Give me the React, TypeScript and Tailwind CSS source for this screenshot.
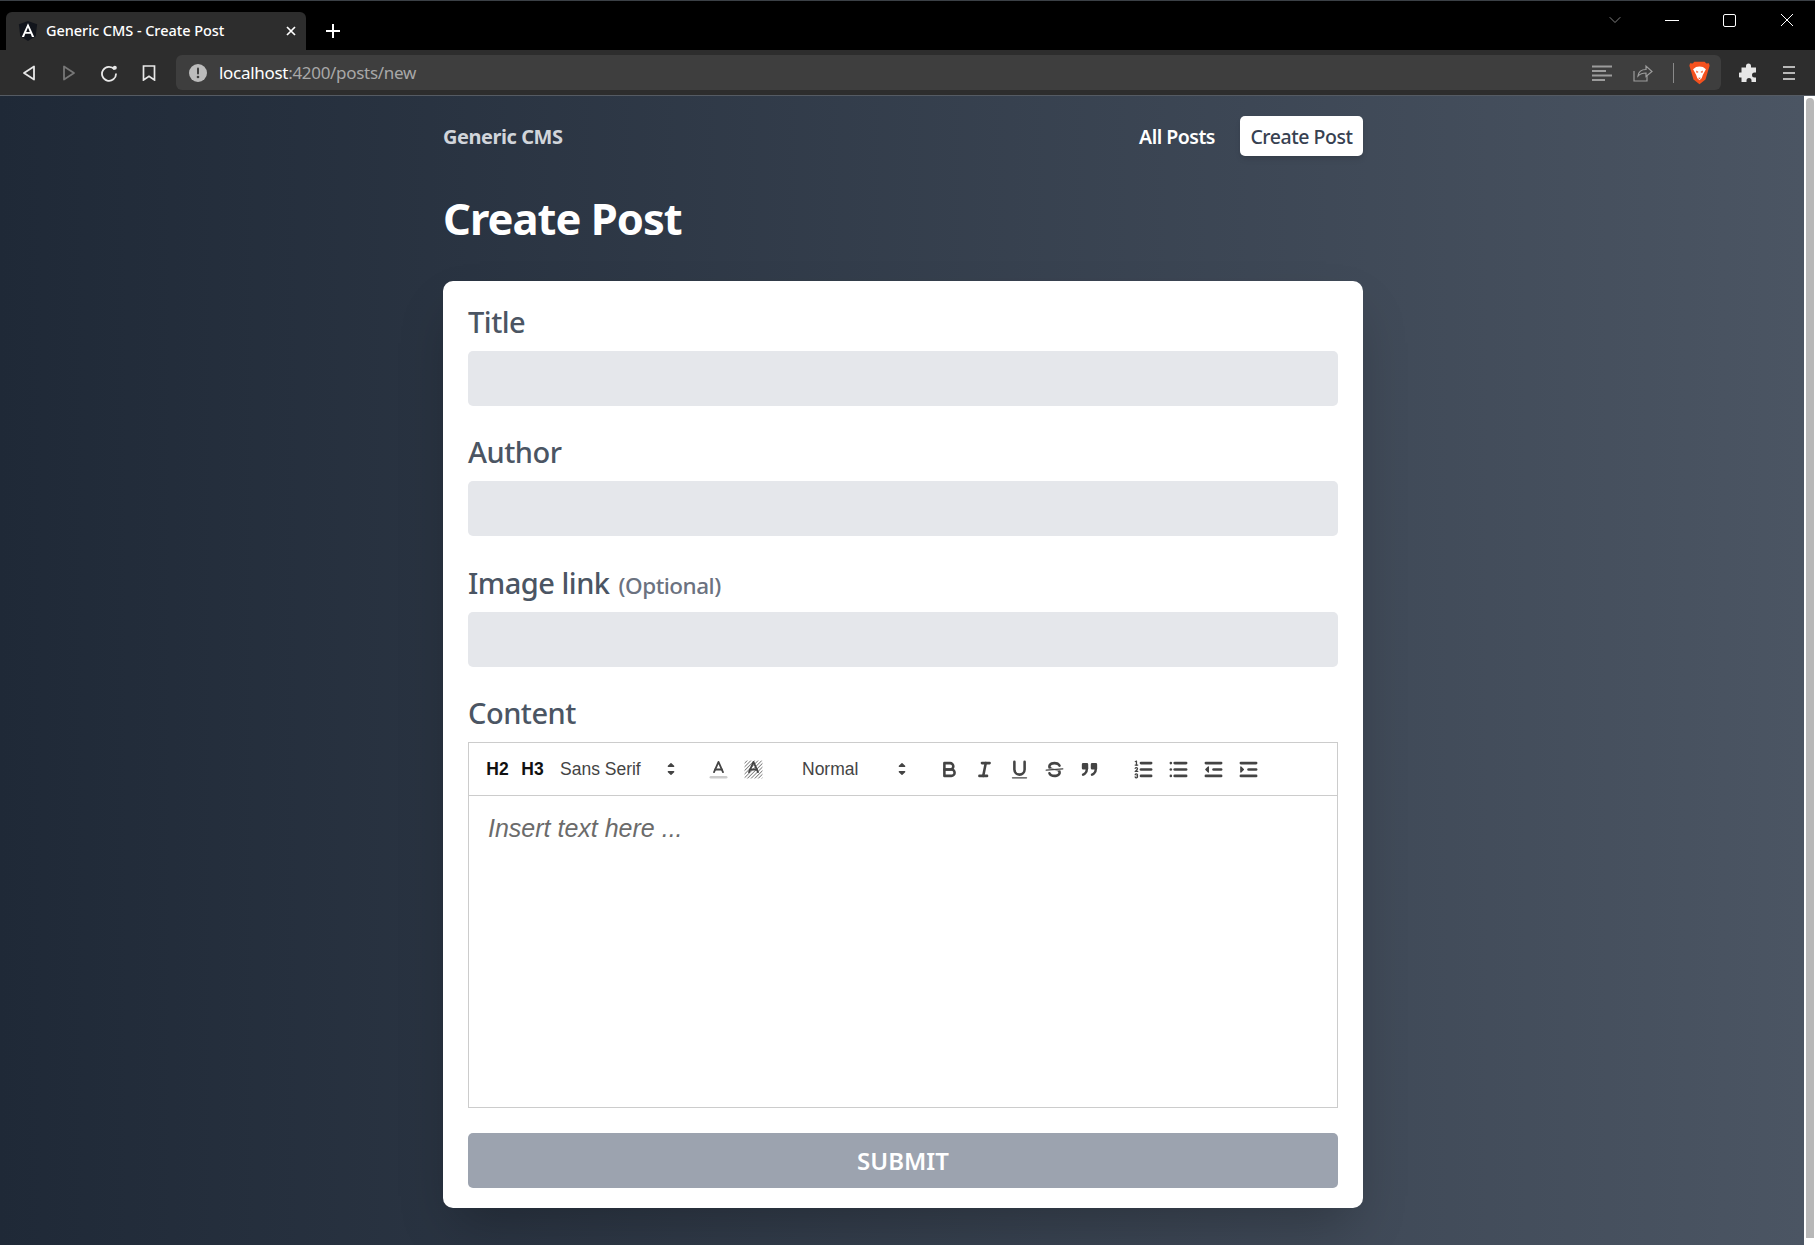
import React from "react";
import { LuChevronDown } from "react-icons/lu";

const ui = "font-['Noto_Sans','Open_Sans',sans-serif]";
const arial = "font-['Liberation_Sans',Arial,sans-serif]";

function QlIcon({ children }: { children: React.ReactNode }) {
  return (
    <svg
      viewBox="0 0 18 18"
      width="23"
      height="23"
      fill="none"
      stroke="#444"
      strokeWidth="2"
      strokeLinecap="round"
      strokeLinejoin="round"
    >
      {children}
    </svg>
  );
}

function QlButton({ children }: { children: React.ReactNode }) {
  return <div className="w-[35px] h-[28px] flex items-center justify-center shrink-0">{children}</div>;
}

function PickerArrows() {
  return (
    <svg viewBox="0 0 18 18" width="24" height="24" fill="#444" stroke="#444" strokeWidth="1" strokeLinejoin="round">
      <polygon points="7 11 9 13 11 11 7 11" />
      <polygon points="7 7 9 5 11 7 7 7" />
    </svg>
  );
}

function Picker({ label, className }: { label: string; className: string }) {
  return (
    <div className={`flex items-center justify-between h-[28px] shrink-0 pl-[5px] text-[17.5px] text-[#444] ${className}`}>
      <span>{label}</span>
      <PickerArrows />
    </div>
  );
}

function Field({ label, hint, className }: { label: string; hint?: string; className: string }) {
  return (
    <div className={className}>
      <label className="block h-[46px] text-[29px] leading-[34px] font-medium text-[#4b5563] tracking-[-0.5px]">
        {label}
        {hint && <span className="text-[22.5px] text-[#6b7280] ml-[9px] tracking-[-0.5px]">{hint}</span>}
      </label>
      <div className="h-[55px] rounded-[5px] bg-[#e5e7eb]" />
    </div>
  );
}

function EditorToolbar() {
  return (
    <div className={`h-[53px] border-b border-[#ccc] flex items-center pl-[11px] ${arial}`}>
      <QlButton>
        <span className="text-[17.5px] font-bold text-[#111]">H2</span>
      </QlButton>
      <QlButton>
        <span className="text-[17.5px] font-bold text-[#111]">H3</span>
      </QlButton>
      <Picker label="Sans Serif" className="w-[128px] ml-[5px]" />
      <div className="ml-[18px] flex">
        <QlButton>
          <QlIcon>
            <line x1="3" x2="15" y1="15" y2="15" stroke="#ccc" />
            <polyline points="5.5 11 9 3 12.5 11" strokeWidth="1.4" />
            <line x1="11.63" x2="6.38" y1="9" y2="9" strokeWidth="1.4" />
          </QlIcon>
        </QlButton>
        <QlButton>
          <QlIcon>
            <defs>
              <pattern id="hatch" width="2" height="2" patternUnits="userSpaceOnUse" patternTransform="rotate(45)">
                <line x1="0" y1="0" x2="0" y2="2" stroke="#444" strokeWidth="0.9" />
              </pattern>
            </defs>
            <rect x="2" y="2" width="14" height="14" fill="url(#hatch)" stroke="none" />
            <polyline points="5.5 11 9 3 12.5 11" strokeWidth="1.4" />
            <line x1="11.63" x2="6.38" y1="9" y2="9" strokeWidth="1.4" />
          </QlIcon>
        </QlButton>
      </div>
      <Picker label="Normal" className="w-[117px] ml-[26px]" />
      <div className="ml-[18px] flex">
        <QlButton>
          <QlIcon>
            <path d="M5,4H9.5A2.5,2.5,0,0,1,12,6.5v0A2.5,2.5,0,0,1,9.5,9H5A0,0,0,0,1,5,9V4A0,0,0,0,1,5,4Z" />
            <path d="M5,9h5.5A2.5,2.5,0,0,1,13,11.5v0A2.5,2.5,0,0,1,10.5,14H5a0,0,0,0,1,0,0V9A0,0,0,0,1,5,9Z" />
          </QlIcon>
        </QlButton>
        <QlButton>
          <QlIcon>
            <line x1="7" x2="13" y1="4" y2="4" />
            <line x1="5" x2="11" y1="14" y2="14" />
            <line x1="8" x2="10" y1="14" y2="4" />
          </QlIcon>
        </QlButton>
        <QlButton>
          <QlIcon>
            <path d="M5,3V9a4.012,4.012,0,0,0,4,4H9a4.012,4.012,0,0,0,4-4V3" />
            <rect x="3" y="15" width="12" height="1" rx=".5" ry=".5" fill="#444" stroke="none" />
          </QlIcon>
        </QlButton>
        <QlButton>
          <QlIcon>
            <line x1="15.5" x2="2.5" y1="8.5" y2="9.5" strokeWidth="1" />
            <path
              fill="#444"
              stroke="none"
              d="M9.007,8C6.542,7.791,6,7.519,6,6.5,6,5.792,7.283,5,9,5c1.571,0,2.765.679,2.969,1.309a1,1,0,0,0,1.9-.617C13.356,4.106,11.354,3,9,3,6.2,3,4,4.538,4,6.5a3.2,3.2,0,0,0,.5,1.843Z"
            />
            <path
              fill="#444"
              stroke="none"
              d="M8.984,10C11.457,10.208,12,10.479,12,11.5c0,.708-1.283,1.5-3,1.5-1.571,0-2.765-.679-2.969-1.309a1,1,0,1,0-1.9.617C4.644,13.894,6.646,15,9,15c2.8,0,5-1.538,5-3.5a3.2,3.2,0,0,0-.5-1.843Z"
            />
          </QlIcon>
        </QlButton>
        <QlButton>
          <QlIcon>
            <rect x="4" y="5" width="3" height="3" fill="#444" />
            <rect x="11" y="5" width="3" height="3" fill="#444" />
            <path d="M7,8c0,4.031-3,5-3,5" />
            <path d="M14,8c0,4.031-3,5-3,5" />
          </QlIcon>
        </QlButton>
      </div>
      <div className="ml-[19px] flex">
        <QlButton>
          <QlIcon>
            <line x1="7" x2="15" y1="4" y2="4" />
            <line x1="7" x2="15" y1="9" y2="9" />
            <line x1="7" x2="15" y1="14" y2="14" />
            <line x1="2.5" x2="4.5" y1="5.5" y2="5.5" strokeWidth="1" />
            <path
              fill="#444"
              stroke="none"
              d="M3.5,6A0.5,0.5,0,0,1,3,5.5V3.085l-0.276.138A0.5,0.5,0,0,1,2.053,3c-0.124-.247-0.023-0.324.224-0.447l1-.5A0.5,0.5,0,0,1,4,2.5v3A0.5,0.5,0,0,1,3.5,6Z"
            />
            <path strokeWidth="1" d="M4.5,10.5h-2c0-.234,1.85-1.076,1.85-2.234A0.959,0.959,0,0,0,2.5,8.156" />
            <path
              strokeWidth="1"
              d="M2.5,14.846a0.959,0.959,0,0,0,1.85-.109A0.7,0.7,0,0,0,3.75,14a0.688,0.688,0,0,0,.6-0.736,0.959,0.959,0,0,0-1.85-.109"
            />
          </QlIcon>
        </QlButton>
        <QlButton>
          <QlIcon>
            <line x1="6" x2="15" y1="4" y2="4" />
            <line x1="6" x2="15" y1="9" y2="9" />
            <line x1="6" x2="15" y1="14" y2="14" />
            <line x1="3" x2="3" y1="4" y2="4" />
            <line x1="3" x2="3" y1="9" y2="9" />
            <line x1="3" x2="3" y1="14" y2="14" />
          </QlIcon>
        </QlButton>
        <QlButton>
          <QlIcon>
            <line x1="3" x2="15" y1="14" y2="14" />
            <line x1="3" x2="15" y1="4" y2="4" />
            <line x1="9" x2="15" y1="9" y2="9" />
            <polyline points="5 7 5 11 3 9 5 7" fill="#444" strokeWidth="1" />
          </QlIcon>
        </QlButton>
        <QlButton>
          <QlIcon>
            <line x1="3" x2="15" y1="14" y2="14" />
            <line x1="3" x2="15" y1="4" y2="4" />
            <line x1="9" x2="15" y1="9" y2="9" />
            <polyline points="3 7 3 11 5 9 3 7" fill="#444" strokeWidth="1" />
          </QlIcon>
        </QlButton>
      </div>
    </div>
  );
}

function BrowserChrome() {
  return (
    <div className={`shrink-0 ${ui}`}>
      <div className="h-[50px] bg-black border-t border-[#3b4046] flex items-end pl-[6px] relative">
        <div className="w-[300px] h-[38px] bg-[#2d2d2d] rounded-t-[6px] flex items-center pl-[11px] pr-[9px]">
          <svg viewBox="0 0 24 24" width="22" height="22" className="shrink-0">
            <path d="M12 1 2 4.6l1.6 13.2L12 23l8.4-5.2L22 4.6z" fill="#12151c" />
            <path d="M12 3.500 5.200 18.500h2.500l1.400-3.400h5.800l1.400 3.400h2.500zm-2 9.500 2-4.800 2 4.800z" fill="#fff" />
          </svg>
          <span className="ml-[7px] flex-1 text-[14.5px] font-medium text-white tracking-[-0.05px] whitespace-nowrap">
            Generic CMS - Create Post
          </span>
          <svg viewBox="0 0 12 12" width="12" height="12" stroke="#fff" strokeWidth="1.7">
            <path d="M2 2l8 8M10 2l-8 8" />
          </svg>
        </div>
        <svg viewBox="0 0 16 16" width="16" height="16" stroke="#fff" strokeWidth="2" className="ml-[19px] mb-[11px]">
          <path d="M8 1v14M1 8h14" />
        </svg>
        <div className="ml-auto self-start flex items-center h-[38px] text-[#d6d6d6] pr-[21px]">
          <LuChevronDown size={20} strokeWidth={1} className="text-[#9a9a9a] mr-[40px]" />
          <span className="w-[14px] h-px bg-white mr-[44px]" />
          <span className="w-[13px] h-[13px] border border-white rounded-[2px] mr-[44px]" />
          <svg viewBox="0 0 14 14" width="14" height="14" stroke="#fff" strokeWidth="1">
            <path d="M1 1l12 12M13 1 1 13" />
          </svg>
        </div>
      </div>
      <div className="h-[46px] bg-[#2d2d2d] border-b border-[#555b63] flex items-center">
        <div className="flex items-center pl-[22px] w-[176px] shrink-0">
          <svg viewBox="0 0 14 16" width="14" height="16" fill="none" stroke="#e8e8e8" strokeWidth="1.8" strokeLinejoin="round">
            <path d="M12 1.5v13L2 8z" />
          </svg>
          <svg viewBox="0 0 14 16" width="14" height="16" fill="none" stroke="#777" strokeWidth="1.8" strokeLinejoin="round" className="ml-[26px]">
            <path d="M2 1.5v13L12 8z" />
          </svg>
          <svg viewBox="0 0 18 18" width="18" height="18" fill="none" stroke="#e8e8e8" strokeWidth="1.8" className="ml-[24px]">
            <path d="M14.5 5.5A7 7 0 1 0 16 9.5" />
            <circle cx="14.8" cy="3.8" r="2" fill="#e8e8e8" stroke="none" />
          </svg>
          <svg viewBox="0 0 14 16" width="14" height="16" fill="none" stroke="#e8e8e8" strokeWidth="1.7" className="ml-[24px]">
            <path d="M1.5 1h11v14L7 11.3 1.5 15z" />
          </svg>
        </div>
        <div className="w-[1545px] h-[35px] rounded-[6px] bg-[#3e3e3e] flex items-center pl-[13px] shrink-0">
          <svg viewBox="0 0 18 18" width="18" height="18">
            <circle cx="9" cy="9" r="9" fill="#bcbcbc" />
            <rect x="8" y="3.5" width="2" height="7" rx="1" fill="#3e3e3e" />
            <circle cx="9" cy="13" r="1.3" fill="#3e3e3e" />
          </svg>
          <span className="ml-[12px] text-[17px] tracking-[-0.3px] text-white whitespace-nowrap">
            localhost<span className="text-[#a8a8a8]">:4200/posts/new</span>
          </span>
          <div className="ml-auto flex items-center pr-[11px]">
            <svg viewBox="0 0 20 16" width="20" height="16" stroke="#9c9c9c" strokeWidth="1.8">
              <path d="M0 1.5h20M0 6h14M0 10.5h20M0 15h13" />
            </svg>
            <svg viewBox="0 0 20 18" width="20" height="18" fill="none" stroke="#9c9c9c" strokeWidth="1.2" className="ml-[21px]">
              <path d="M1 7v10h13v-5M5 12c.5-4 3-6.500 8-6.500V2l6 5.500-6 5V9c-3.500 0-6 1-8 3z" />
            </svg>
            <span className="ml-[20px] w-px h-[20px] bg-[#8a8a8a]" />
            <svg viewBox="0 0 24 28" width="21" height="24" className="ml-[15px]">
              <path d="M6 1h12l2 2 3-.5.8 3-1.800 6-3 10-7 5.500-7-5.500-3-10-1.800-6 .8-3 3 .5z" fill="#f4511e" />
              <path d="M8 7c2-.8 6-.8 8 0l3.500 2.500-3.500 6.500-1.500 4-2.500 2.500-2.500-2.500-1.500-4-3.500-6.500z" fill="#fff" />
              <path d="M8 11l3 1.800-2.300 1.200zM16 11l-3 1.800 2.300 1.200zM10.300 19.500h3.400L12 21.300z" fill="#f4511e" />
            </svg>
          </div>
        </div>
        <svg viewBox="0 0 20 20" width="20" height="20" fill="#e6e6e6" className="ml-[18px]">
          <path d="M7 4.500V3a2.500 2.500 0 0 1 5 0v1.500h5v5h-1.500a2.500 2.500 0 0 0 0 5H17V19h-4.500v-1.500a2.500 2.500 0 0 0-5 0V19H2.500v-4.500H1a2.500 2.500 0 0 1 0-5h1.500v-5z" />
        </svg>
        <svg viewBox="0 0 12 14" width="12" height="14" stroke="#e6e6e6" strokeWidth="1.5" className="ml-[24px]">
          <path d="M0 1h12M0 7h12M0 13h12" />
        </svg>
      </div>
    </div>
  );
}

export default function App() {
  return (
    <div className={`w-[1815px] h-[1245px] overflow-hidden flex flex-col bg-black ${ui}`}>
      <BrowserChrome />
      <div className="flex-1 flex min-h-0">
        <main className="flex-1 bg-linear-to-r from-[#1f2937] to-[#4b5563] flex justify-center pl-[2px]">
          <div className="w-[920px]">
            <nav className="h-[60px] mt-[10px] flex items-center">
              <span className="pt-[1px] text-[20px] font-bold text-[#d1d5db] tracking-[-0.45px]">Generic CMS</span>
              <span className="pt-[1px] ml-auto text-[19.5px] font-semibold text-white tracking-[-0.5px]">All Posts</span>
              <span className="ml-[25px] h-[40px] w-[123px] pt-[1px] flex items-center justify-center rounded-[5px] bg-white text-[19.5px] font-medium text-[#374151] tracking-[-0.45px] shadow-md">
                Create Post
              </span>
            </nav>
            <h1 className="mt-[22px] h-[60px] leading-[60px] text-[43.5px] font-bold text-white tracking-[-1px]">Create Post</h1>
            <form className="mt-[33px] h-[927px] rounded-[10px] bg-white shadow-2xl px-[25px] pt-[24px]">
              <Field label="Title" className="" />
              <Field label="Author" className="mt-[29px]" />
              <Field label="Image link" hint="(Optional)" className="mt-[30px]" />
              <label className="block mt-[29px] h-[46px] text-[29px] leading-[34px] font-medium text-[#4b5563] tracking-[-0.5px]">
                Content
              </label>
              <div className="h-[366px] border border-[#ccc]">
                <EditorToolbar />
                <div className={`pl-[19px] pt-[14px] text-[25px] italic text-[#6b6b6b] ${arial}`}>Insert text here ...</div>
              </div>
              <button
                type="button"
                className="mt-[25px] w-full h-[55px] rounded-[5px] bg-[#9ca3af] text-[24px] font-semibold text-white tracking-[0px]"
              >
                SUBMIT
              </button>
            </form>
          </div>
        </main>
        <div className="w-[11px] bg-white pt-[2px] shrink-0">
          <div className="ml-[2px] w-[8px] h-[1140px] rounded-t-full bg-[#b8b8b8]" />
        </div>
      </div>
    </div>
  );
}
